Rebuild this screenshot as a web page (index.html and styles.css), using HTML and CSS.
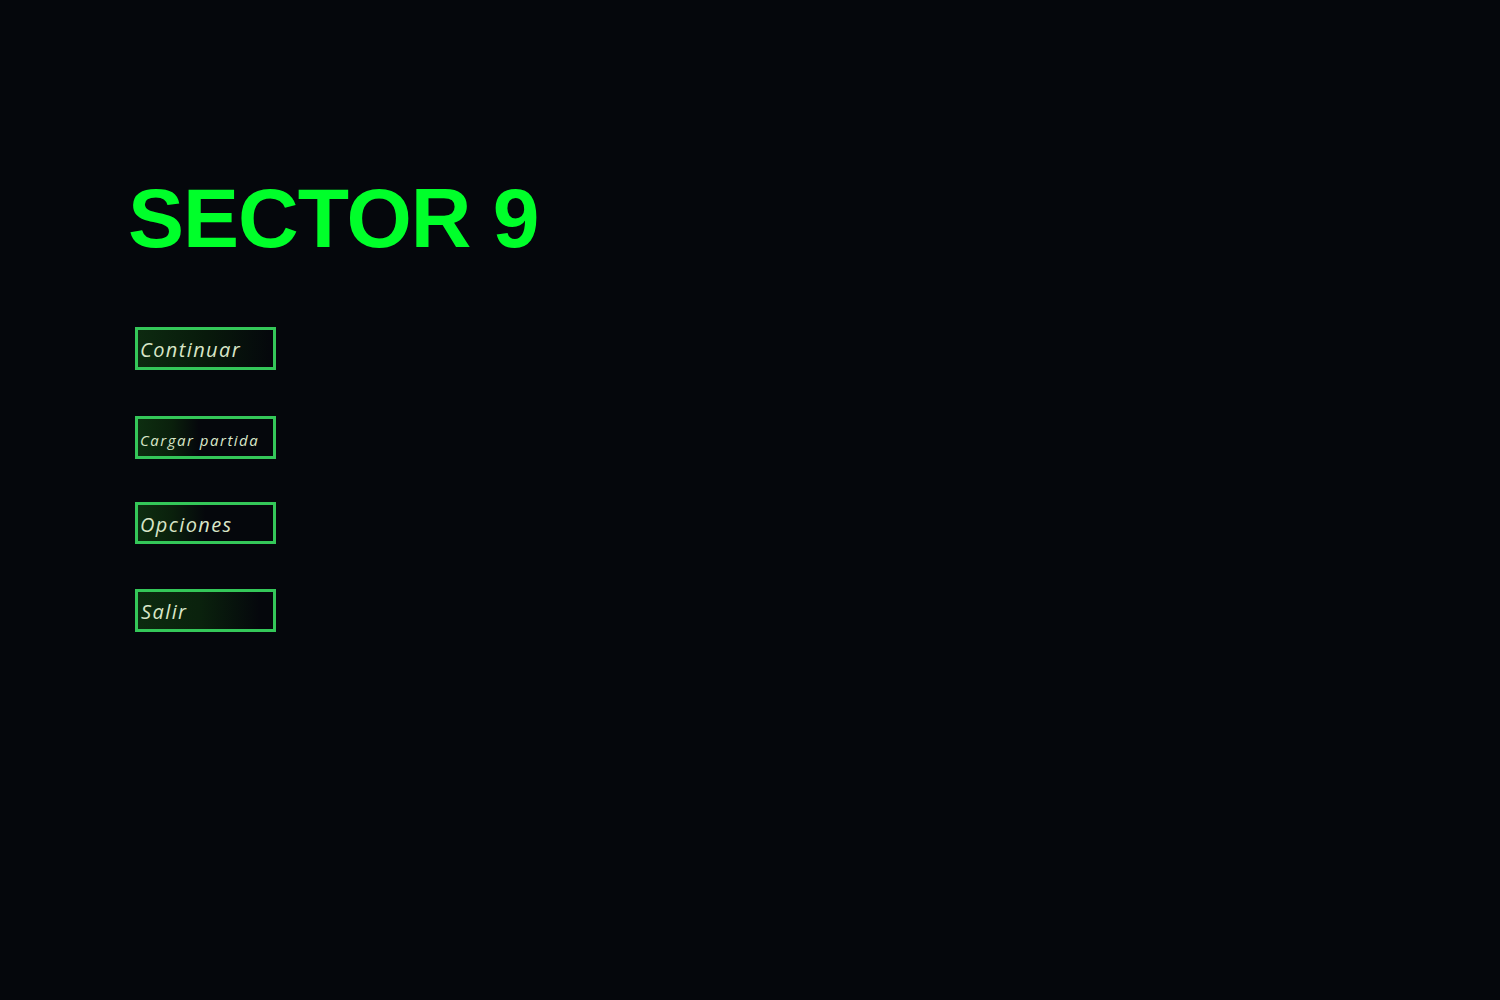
FILE: index.html
```html
<!DOCTYPE html>
<html lang="es">
<head>
<meta charset="utf-8">
<title>Sector 9</title>
<link rel="stylesheet" href="styles.css">
</head>
<body>
<main class="menu">
  <h1 class="title">SECTOR 9</h1>
  <nav class="buttons">
    <button class="btn btn-continue">Continuar</button>
    <button class="btn btn-load">Cargar partida</button>
    <button class="btn btn-options">Opciones</button>
    <button class="btn btn-exit">Salir</button>
  </nav>
</main>
</body>
</html>
```
FILE: styles.css
```css
html, body {
  margin: 0;
  padding: 0;
  background: #05070c;
  height: 100%;
}
.menu {
  padding: 176px 0 0 128px;
}
.title {
  margin: 0;
  font-family: "Liberation Sans", Arial, sans-serif;
  font-weight: 700;
  font-size: 84px;
  line-height: 84px;
  letter-spacing: -1px;
  color: #00ff2a;
}
.buttons {
  display: flex;
  flex-direction: column;
  align-items: flex-start;
  margin: 67px 0 0 7px;
}
.btn {
  box-sizing: border-box;
  width: 141px;
  height: 43px;
  border: 3px solid #34c759;
  padding: 2px 0 0 2px;
  margin: 0;
  text-align: left;
  font-family: "Open Sans", sans-serif;
  font-style: italic;
  font-size: 20px;
  letter-spacing: 1.4px;
  color: #d9e6c8;
  background: transparent;
  cursor: pointer;
  white-space: nowrap;
}
.btn-continue {
  background: linear-gradient(to right, #0d2a10 0%, #081a0b 50%, #05070c 100%);
}
.btn-load {
  margin-top: 46px;
  font-size: 15px;
  letter-spacing: 1.5px;
  padding-top: 4px;
  background: linear-gradient(to right, #0d2e10 0%, #0a200c 25%, #05070c 45%);
}
.btn-options {
  margin-top: 43px;
  height: 42px;
  background: linear-gradient(to right, #0d2e10 0%, #0a200c 25%, #05070c 50%);
}
.btn-exit {
  margin-top: 45px;
  padding-left: 3px;
  background: linear-gradient(to right, #0c2a0f 0%, #0a220d 45%, #05070c 90%);
}
```
